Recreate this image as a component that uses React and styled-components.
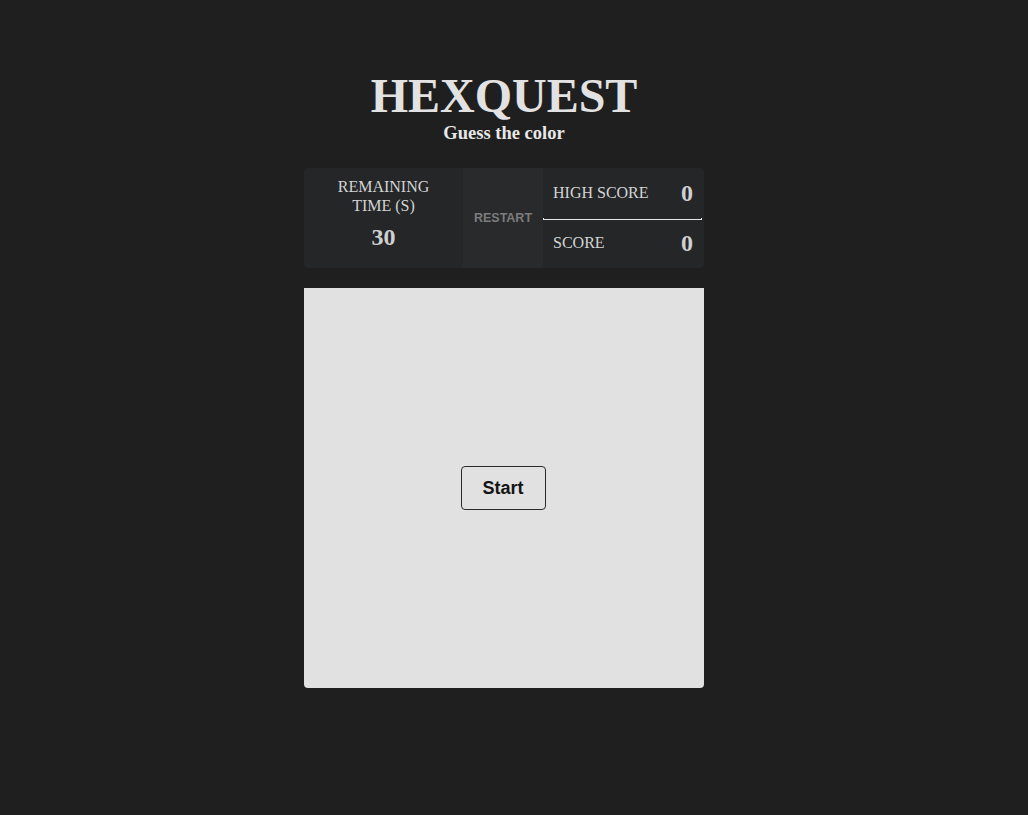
import React from "react";
import styled, { createGlobalStyle } from "styled-components";

const GlobalStyle = createGlobalStyle`
  html, body {
    margin: 0;
    padding: 0;
    background: #1f1f1f;
  }
  body {
    font-family: "Liberation Serif", "Times New Roman", serif;
    color: #e2e2e2;
  }
`;

function StatRow({ label, value, divider }) {
  return (
    <Row>
      <RowLabel>{label}</RowLabel>
      <RowValue>{value}</RowValue>
      {divider && <Divider />}
    </Row>
  );
}

function App() {
  return (
    <>
      <GlobalStyle />
      <Page>
        <Header>
          <Title>HEXQUEST</Title>
          <Subtitle>Guess the color</Subtitle>
        </Header>

        <Stats>
          <TimeCell>
            <CellLabel>
              REMAINING
              <br />
              TIME (S)
            </CellLabel>
            <CellValue>30</CellValue>
          </TimeCell>
          <RestartButton>RESTART</RestartButton>
          <ScoreCell>
            <StatRow label="HIGH SCORE" value="0" divider />
            <StatRow label="SCORE" value="0" />
          </ScoreCell>
        </Stats>

        <Board>
          <StartButton>Start</StartButton>
        </Board>
      </Page>
    </>
  );
}

export default App;

const Page = styled.div`
  // the whole page column, leaves room on the right like a scrollbar gutter
  min-height: 815px;
  display: flex;
  flex-direction: column;
  align-items: center;
  padding: 68px 20px 0 0;
  box-sizing: border-box;
`;

const Header = styled.header`
  display: flex;
  flex-direction: column;
  align-items: center;
  margin-bottom: 24px;
`;

const Title = styled.h1`
  margin: 0;
  font-size: 48px;
  font-weight: 700;
  line-height: 55px;
  color: #e2e2e2;
`;

const Subtitle = styled.h4`
  margin: 0;
  font-size: 18.5px;
  font-weight: 700;
  line-height: 21px;
  color: #e8e8e8;
`;

const Stats = styled.section`
  // score / time panel
  width: 400px;
  height: 100px;
  display: grid;
  grid-template-columns: 159px 80px 1fr;
  background: #242628;
  border-radius: 4px;
  overflow: hidden;
  margin-bottom: 20px;
`;

const TimeCell = styled.div`
  display: flex;
  flex-direction: column;
  align-items: center;
  padding-top: 10px;
  gap: 9px;
  text-align: center;
`;

const CellLabel = styled.div`
  font-size: 16px;
  line-height: 18.5px;
  color: #d4d4d4;
`;

const CellValue = styled.div`
  font-size: 24px;
  font-weight: 700;
  line-height: 27px;
  color: #d0d0d0;
`;

const RestartButton = styled.button`
  border: none;
  background: #292a2c;
  color: #7c7c7c;
  font-family: "Liberation Sans", Arial, sans-serif;
  font-size: 12.5px;
  font-weight: 700;
  padding: 0;
  cursor: pointer;
`;

const ScoreCell = styled.div`
  display: grid;
  grid-template-rows: 50px 1fr;
`;

const Row = styled.div`
  position: relative;
  display: flex;
  align-items: center;
  justify-content: space-between;
  padding: 0 11px 0 10px;
`;

const RowLabel = styled.span`
  font-size: 16px;
  color: #d4d4d4;
`;

const RowValue = styled.span`
  font-size: 24px;
  font-weight: 700;
  color: #d0d0d0;
`;

const Divider = styled.div`
  position: absolute;
  left: 0;
  right: 2px;
  bottom: -2px;
  height: 1px;
  border: 1px solid #e6e6e6;
  border-top: none;
`;

const Board = styled.main`
  // the colour square
  width: 400px;
  height: 400px;
  background: #e1e1e1;
  border-radius: 0 0 4px 4px;
  display: flex;
  align-items: center;
  justify-content: center;
`;

const StartButton = styled.button`
  width: 85px;
  height: 44px;
  margin-right: 2px;
  border: 1px solid #2a2a2a;
  border-radius: 4px;
  background: transparent;
  color: #141414;
  font-family: "Liberation Sans", Arial, sans-serif;
  font-size: 18px;
  font-weight: 700;
  cursor: pointer;
`;
